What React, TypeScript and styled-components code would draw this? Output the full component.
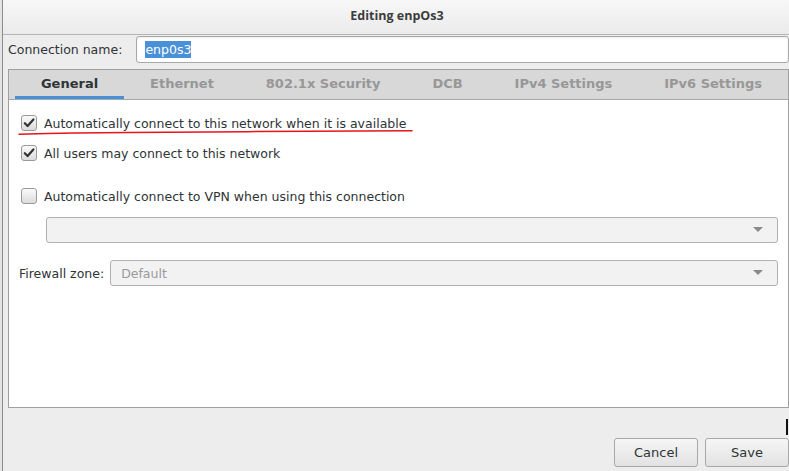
import * as React from 'react';
import styled, { createGlobalStyle } from 'styled-components';

const GlobalStyle = createGlobalStyle`
    html, body {
        margin: 0;
        padding: 0;
        background: #e4e4e4;
        overflow: hidden;
    }
    body {
        font-family: "DejaVu Sans", "Liberation Sans", sans-serif;
        font-size: 12.5px;
        color: #2e3436;
    }
`;

const tabs = ['General', 'Ethernet', '802.1x Security', 'DCB', 'IPv4 Settings', 'IPv6 Settings'];

const CheckIcon = () => (
    <svg width="12" height="12" viewBox="0 0 12 12">
        <path d="M1.8 6.2 L4.6 9 L10.4 2.4" fill="none" stroke="#2e3436" strokeWidth="2.2" strokeLinecap="round" strokeLinejoin="round" />
    </svg>
);

const Arrow = () => (
    <svg width="10" height="6" viewBox="0 0 10 6">
        <path d="M0 0 H10 L5 5 Z" fill="#8a8a8a" />
    </svg>
);

interface CheckRowProps {
    label: string
    checked: boolean
    gap: number
    underline?: boolean
}

const CheckRow = ({ label, checked, gap, underline }: CheckRowProps) => (
    <Row $gap={gap}>
        <Box>{checked && <CheckIcon />}</Box>
        <span>{label}</span>
        {underline && (
            <Scribble width="400" height="8" viewBox="0 0 400 8">
                <path
                    d="M1 6.2 C 30 5.4, 60 4.6, 110 4.4 C 170 4.2, 230 3.6, 290 3.2 C 340 2.9, 370 2.6, 394 2.8"
                    fill="none"
                    stroke="#e8141a"
                    strokeWidth="1.5"
                    strokeLinecap="round"
                />
            </Scribble>
        )}
    </Row>
);

export default function App() {
    return (
        <>
            <GlobalStyle />
            <Window>
                <TitleBar>Editing enpOs3</TitleBar>
                <NameRow>
                    <Label>Connection name:</Label>
                    <NameInput>
                        <Selected>enp0s3</Selected>
                    </NameInput>
                </NameRow>
                <Notebook>
                    <TabStrip>
                        {tabs.map((t, i) => (
                            <Tab key={t} $active={i === 0}>{t}</Tab>
                        ))}
                    </TabStrip>
                    <Page>
                        <CheckRow label="Automatically connect to this network when it is available" checked gap={0} underline />
                        <CheckRow label="All users may connect to this network" checked gap={14} />
                        <CheckRow label="Automatically connect to VPN when using this connection" checked={false} gap={27} />
                        <VpnCombo>
                            <Combo>
                                <ComboText />
                                <Arrow />
                            </Combo>
                        </VpnCombo>
                        <ZoneRow>
                            <ZoneLabel>Firewall zone:</ZoneLabel>
                            <Combo>
                                <ComboText>Default</ComboText>
                                <Arrow />
                            </Combo>
                        </ZoneRow>
                    </Page>
                </Notebook>
                <ButtonBar>
                    <Button>Cancel</Button>
                    <Button>Save</Button>
                </ButtonBar>
                <Cursor />
            </Window>
        </>
    );
}

const Window = styled.div`
    position: relative;
    margin-left: 2px;
    width: 787px;
    height: 471px;
    background: #ededed;
    border-left: 1px solid #8c8c8c;
    display: flex;
    flex-direction: column;
    box-sizing: border-box;
`;

const TitleBar = styled.div`
    height: 35px;
    box-sizing: border-box;
    display: flex;
    align-items: center;
    justify-content: center;
    padding-left: 2px;
    padding-bottom: 4px;
    background: linear-gradient(#f7f7f7, #ebebeb);
    border-bottom: 1px solid #b4b4b4;
    font-family: "Open Sans", "DejaVu Sans", sans-serif;
    font-weight: 700;
    font-size: 12.5px;
    color: #3a3c3d;
`;

const NameRow = styled.div`
    display: flex;
    align-items: center;
    padding: 0 0 0 5px;
    margin-top: 1px;
    gap: 14px;
`;

const Label = styled.span`
    color: #2e3436;
`;

const NameInput = styled.div`
    flex: 1;
    height: 27px;
    box-sizing: border-box;
    display: flex;
    align-items: center;
    padding-left: 8px;
    background: #fff;
    border: 1px solid #a8a8a8;
    border-radius: 3px;
    box-shadow: inset 0 1px 2px rgba(0, 0, 0, 0.08);
`;

const Selected = styled.span`
    background: #4a90d9;
    color: #fff;
    padding: 1px 0;
`;

const Notebook = styled.div`
    margin: 6px 0 0 5px;
    height: 339px;
    box-sizing: border-box;
    border: 1px solid #a0a0a0;
    display: flex;
    flex-direction: column;
`;

const TabStrip = styled.div`
    display: flex;
    height: 30px;
    box-sizing: border-box;
    background: #d8d8d8;
    border-bottom: 1px solid #a8a8a8;
    padding-left: 6px;
`;

const Tab = styled.div<{ $active: boolean }>`
    flex: 1 1 auto;
    display: flex;
    align-items: center;
    justify-content: center;
    padding: 0 4px 3px;
    font-weight: 700;
    font-size: 13px;
    color: ${p => (p.$active ? '#2e3436' : '#979797')};
    box-shadow: ${p => (p.$active ? 'inset 0 -3px 0 #4a90d9' : 'none')};
`;

const Page = styled.div`
    flex: 1;
    background: #fff;
    padding: 15px 0 0 12px;
    display: flex;
    flex-direction: column;
`;

const Row = styled.div<{ $gap: number }>`
    position: relative;
    display: flex;
    align-items: center;
    gap: 7px;
    margin-top: ${p => p.$gap}px;
    height: 16px;
    color: #2e3436;
`;

const Box = styled.div`
    width: 16px;
    height: 16px;
    box-sizing: border-box;
    display: flex;
    align-items: center;
    justify-content: center;
    border: 1px solid #9a9a9a;
    border-radius: 3px;
    background: linear-gradient(#fafafa, #dcdcdc);
`;

const Scribble = styled.svg`
    position: absolute;
    left: -3px;
    top: 13px;
    overflow: visible;
`;

const VpnCombo = styled.div`
    display: flex;
    margin: 13px 0 0 25px;
    padding-right: 10px;
`;

const Combo = styled.div`
    flex: 1;
    height: 26px;
    box-sizing: border-box;
    display: flex;
    align-items: center;
    justify-content: space-between;
    padding: 0 14px 0 10px;
    background: #f2f2f2;
    border: 1px solid #b0b0b0;
    border-radius: 3px;
`;

const ComboText = styled.span`
    color: #9a9a9a;
`;

const ZoneRow = styled.div`
    display: flex;
    align-items: center;
    gap: 6px;
    margin-top: 17px;
    padding-right: 10px;
    margin-left: -2px;
`;

const ZoneLabel = styled.span`
    color: #2e3436;
`;

const ButtonBar = styled.div`
    flex: 1;
    display: flex;
    justify-content: flex-end;
    align-items: flex-end;
    gap: 7px;
    padding: 0 0 4px;
`;

const Button = styled.div`
    width: 84px;
    height: 29px;
    box-sizing: border-box;
    display: flex;
    align-items: center;
    justify-content: center;
    font-size: 13px;
    color: #2e3436;
    border: 1px solid #a8a8a8;
    border-radius: 3px;
    background: linear-gradient(#f6f6f6, #e2e2e2);
`;

const Cursor = styled.div`
    position: absolute;
    left: 783px;
    top: 419px;
    width: 2px;
    height: 16px;
    background: #111;
`;
